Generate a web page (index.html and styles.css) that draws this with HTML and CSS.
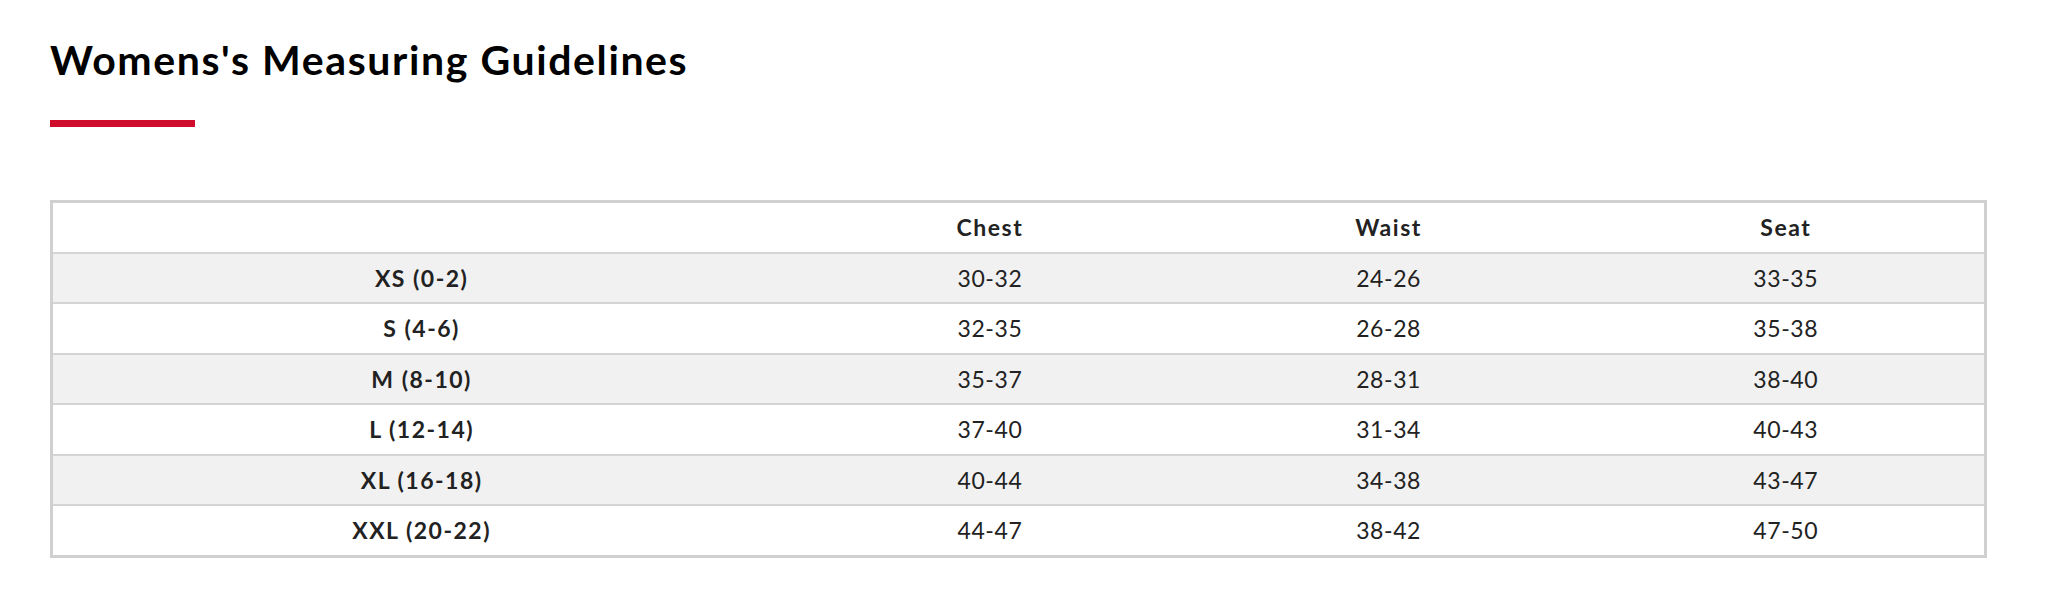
FILE: index.html
```html
<!DOCTYPE html>
<html>
<head>
<meta charset="utf-8">
<link rel="stylesheet" href="styles.css">
</head>
<body>
<div class="page">
  <h1 class="title">Womens's Measuring Guidelines</h1>
  <div class="accent"></div>
  <table class="size-table">
    <colgroup>
      <col class="col-size">
      <col class="col-val">
      <col class="col-val">
      <col class="col-val">
    </colgroup>
    <thead>
      <tr><th></th><th>Chest</th><th>Waist</th><th>Seat</th></tr>
    </thead>
    <tbody>
      <tr><th>XS (0-2)</th><td>30-32</td><td>24-26</td><td>33-35</td></tr>
      <tr><th>S (4-6)</th><td>32-35</td><td>26-28</td><td>35-38</td></tr>
      <tr><th>M (8-10)</th><td>35-37</td><td>28-31</td><td>38-40</td></tr>
      <tr><th>L (12-14)</th><td>37-40</td><td>31-34</td><td>40-43</td></tr>
      <tr><th>XL (16-18)</th><td>40-44</td><td>34-38</td><td>43-47</td></tr>
      <tr><th>XXL (20-22)</th><td>44-47</td><td>38-42</td><td>47-50</td></tr>
    </tbody>
  </table>
</div>
</body>
</html>
```
FILE: styles.css
```css
html, body {
  margin: 0;
  padding: 0;
  background: #fff;
}
.page {
  padding: 36px 61px 0 50px;
  font-family: Lato, "Liberation Sans", sans-serif;
}
.title {
  margin: 0;
  font-size: 41px;
  line-height: 48px;
  font-weight: 700;
  color: #000;
  letter-spacing: 1.6px;
}
.accent {
  width: 145px;
  height: 7px;
  background: #d00c2c;
  margin-top: 36px;
  margin-bottom: 73px;
}
.size-table {
  width: 100%;
  border-collapse: collapse;
  border: 3px solid #d0d0d0;
  color: #222;
  font-size: 23px;
}
.col-size { width: 38.2%; }
.size-table th,
.size-table td {
  height: 48.5px;
  padding: 0;
  text-align: center;
  border-bottom: 2px solid #d4d4d4;
}
.size-table th {
  font-weight: 700;
  letter-spacing: 1.5px;
}
.size-table td {
  font-weight: 400;
  letter-spacing: 0.6px;
}
.size-table thead tr { background: #fff; }
.size-table tbody tr:nth-child(odd) { background: #f1f1f1; }
.size-table tbody tr:nth-child(even) { background: #fff; }
```
